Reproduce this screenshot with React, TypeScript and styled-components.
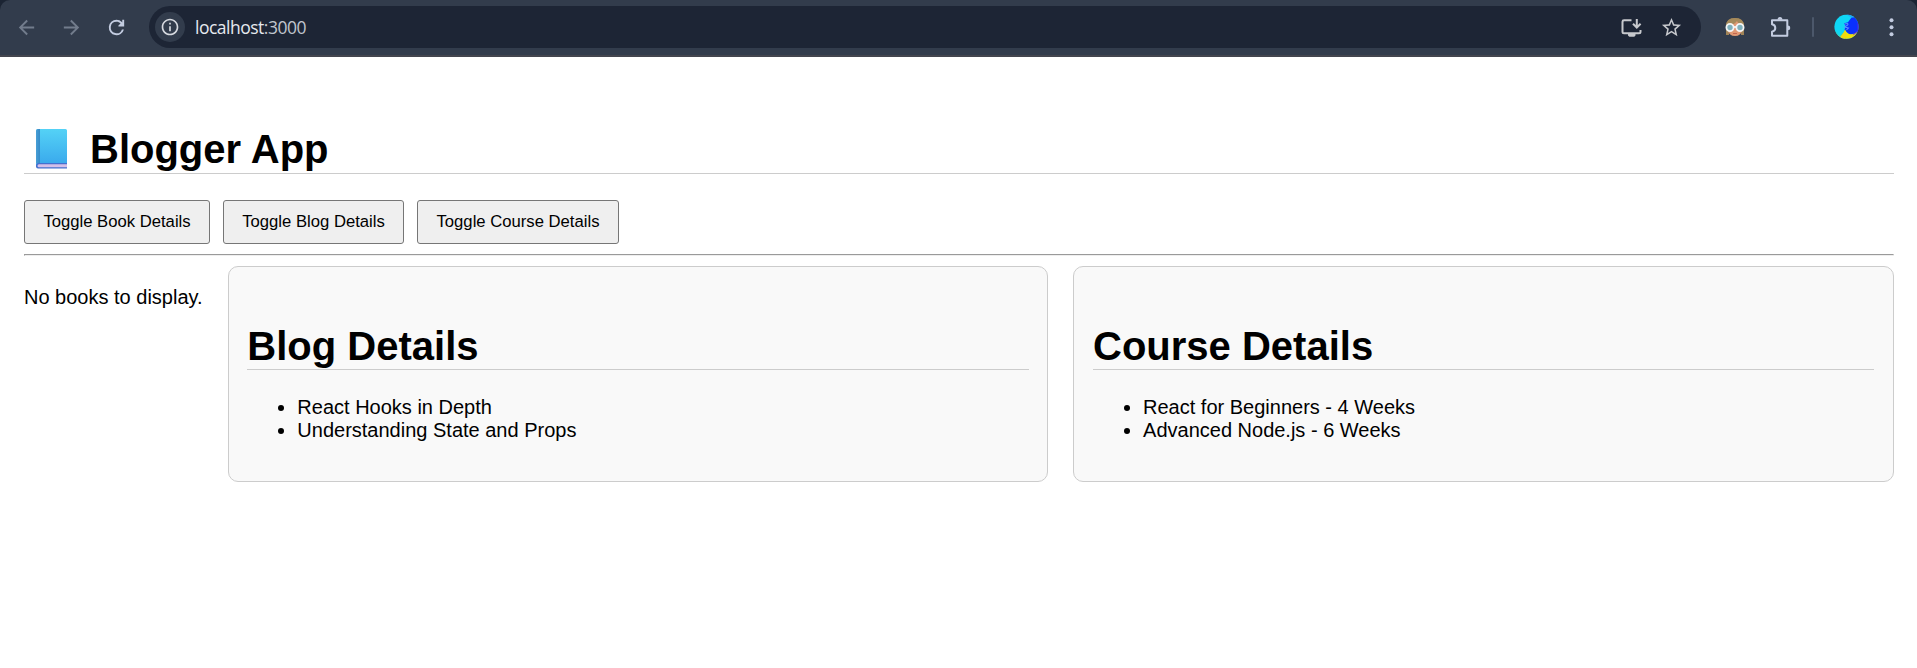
import React, { useState } from "react";
import styled, { createGlobalStyle } from "styled-components";

const GlobalStyle = createGlobalStyle`
  * { box-sizing: border-box; }
  body {
    margin: 0;
    background: #fff;
    color: #000;
    font: 20px/23px "Liberation Sans", Arial, sans-serif;
  }
`;

const Frame = styled.div`
  background: #1b2433;
`;

const Toolbar = styled.header`
  display: flex;
  align-items: center;
  height: 57px;
  padding: 0 13px 1px 14px;
  background: #323c4c;
  border-bottom: 2px solid #43454e;
  border-radius: 10px 10px 0 0;
`;

const NavGroup = styled.nav`
  display: flex;
  gap: 20px;
  margin-right: 20px;
`;

const IconButton = styled.span<{ $color?: string; $size?: number }>`
  display: flex;
  align-items: center;
  justify-content: center;
  flex: none;
  width: ${(p) => p.$size ?? 25}px;
  height: ${(p) => p.$size ?? 25}px;
  color: ${(p) => p.$color ?? "#c3cce0"};
  svg { display: block; }
`;

const AddressBar = styled.div`
  display: flex;
  align-items: center;
  flex: 1;
  height: 42px;
  padding: 0 17px 0 6px;
  border-radius: 21px;
  background: #1d2535;
`;

const SiteInfo = styled(IconButton)`
  border-radius: 50%;
  background: #323c4c;
`;

const Url = styled.span`
  flex: 1;
  margin-left: 10px;
  color: #e6e9ef;
  font: 17.5px/24px "Open Sans", "Noto Sans", sans-serif;
  letter-spacing: -0.5px;
`;

const Port = styled.span`
  color: #c0c5ce;
`;

const AddressActions = styled.div`
  display: flex;
  gap: 15px;
`;

const BrowserActions = styled.div`
  display: flex;
  align-items: center;
  margin-left: 21px;
`;

const Extensions = styled.div`
  display: flex;
  gap: 21px;
`;

const Separator = styled.span`
  width: 2px;
  height: 20px;
  margin: 0 20px 0 19px;
  border-radius: 1px;
  background: #4c586b;
`;

const Account = styled.div`
  display: flex;
  gap: 20px;
`;

const Page = styled.main`
  padding: 70px 23px 0 24px;
`;

const Title = styled.h1`
  display: flex;
  align-items: flex-start;
  height: 47px;
  margin: 0 0 26px;
  border-bottom: 1px solid #ccc;
  font-size: 40px;
  line-height: 45px;
  svg { flex: none; margin: 2px 23px 0 12px; }
`;

const ButtonRow = styled.div`
  display: flex;
  gap: 13px;
`;

const ToggleButton = styled.button<{ $width: number }>`
  width: ${(p) => p.$width}px;
  height: 44px;
  padding: 0 0 2px;
  border: 1px solid #767676;
  border-radius: 3px;
  background: #efefef;
  color: #000;
  font: 16.667px/19px "Liberation Sans", Arial, sans-serif;
  white-space: nowrap;
`;

const Rule = styled.hr`
  height: 2px;
  margin: 10px 0;
  border: 1px solid;
  border-color: #9a9a9a #eee #eee #9a9a9a;
`;

const Columns = styled.div`
  display: flex;
  gap: 25px;
`;

const EmptyNote = styled.p`
  flex: none;
  width: 178.6px;
  margin: 20px 0 0;
  white-space: nowrap;
`;

const Card = styled.section`
  flex: 1;
  height: 216px;
  padding: 57px 18.75px 0;
  border: 1px solid #ccc;
  border-radius: 10px;
  background: #f9f9f9;
`;

const CardTitle = styled(Title)`
  height: 46px;
  margin-bottom: 26px;
`;

const List = styled.ul`
  margin: 0;
  padding-left: 50px;
`;

const ArrowIcon = ({ flip = false }: { flip?: boolean }) => (
  <svg width="23" height="23" viewBox="0 0 24 24" fill="currentColor">
    <path
      transform={flip ? "translate(24 0) scale(-1 1)" : undefined}
      d="M20 11H7.83l5.59-5.59L12 4l-8 8 8 8 1.41-1.41L7.83 13H20v-2z"
    />
  </svg>
);

const ReloadIcon = () => (
  <svg width="23" height="23" viewBox="0 0 24 24" fill="currentColor">
    <path d="M17.65 6.35A7.96 7.96 0 0 0 12 4a8 8 0 1 0 7.73 10h-2.08A6 6 0 1 1 12 6c1.66 0 3.14.69 4.22 1.78L14 10v1h6V4h-2v2.7z" />
  </svg>
);

const InfoIcon = () => (
  <svg width="20" height="20" viewBox="0 0 24 24" fill="currentColor">
    <path d="M11 7h2v2h-2zm0 4h2v6h-2zm1-9C6.48 2 2 6.48 2 12s4.48 10 10 10 10-4.48 10-10S17.52 2 12 2zm0 18c-4.41 0-8-3.59-8-8s3.59-8 8-8 8 3.59 8 8-3.59 8-8 8z" />
  </svg>
);

const InstallIcon = () => (
  <svg width="25" height="25" viewBox="0 0 25 25" fill="none" stroke="currentColor" strokeWidth="2">
    <path d="M12.5 5.3H5Q3.5 5.3 3.5 6.7V16.7Q3.5 18.2 5 18.2H20Q21.5 18.2 21.5 16.7V15" />
    <path d="M17.8 4V12M14 8.7l3.8 3.8 3.8-3.8" />
    <path d="M9 18h7.5v2.5l-1.2 1.2h-5L9 20.5z" fill="currentColor" stroke="none" />
  </svg>
);

const StarIcon = () => (
  <svg width="23" height="23" viewBox="0 0 24 24" fill="currentColor">
    <path d="M22 9.24l-7.19-.62L12 2 9.19 8.63 2 9.24l5.46 4.73L5.82 21 12 17.27 18.18 21l-1.63-7.03L22 9.24zM12 15.4l-3.76 2.27 1-4.28-3.32-2.88 4.38-.38L12 6.1l1.71 4.04 4.38.38-3.32 2.88 1 4.28L12 15.4z" />
  </svg>
);

const FaceIcon = () => (
  <svg width="20" height="20" viewBox="0 0 20 20">
    <path d="M1 18V9Q1 1 10 1t9 8v9h-3V8H4v10z" fill="#a08458" />
    <path d="M3 8Q9 7 12 3q2 4 5 5v5q-1 6-7 6t-7-6z" fill="#e09873" />
    <path d="M1 10Q1 1 10 1t9 9Q14 8 12 4 9 8 1 10z" fill="#a58a5b" />
    <g fill="#7fb0bc" stroke="#f4f5f5" strokeWidth="1.8">
      <circle cx="5" cy="10.5" r="3.6" />
      <circle cx="15" cy="10.5" r="3.6" />
      <path d="M8.5 10h3" />
    </g>
    <path d="M8 16.5h4" stroke="#c4664f" strokeWidth="1" />
  </svg>
);

const PuzzleIcon = () => (
  <svg width="25" height="25" viewBox="0 0 25 25" fill="none" stroke="currentColor" strokeWidth="2" strokeLinejoin="round">
    <path d="M4 5.2H19.3V20.7H4V16.7Q7.3 16 7.3 13T4 9.3z" />
    <path d="M9.6 4.7a2.4 2.7 0 0 1 4.8 0zM19.8 10.5a2.5 2.4 0 0 1 0 4.8z" fill="currentColor" stroke="none" />
  </svg>
);

const ProfileIcon = () => (
  <svg width="26" height="26" viewBox="0 0 26 26">
    <defs>
      <clipPath id="profile-disc"><circle cx="13" cy="12.7" r="12.6" /></clipPath>
    </defs>
    <g clipPath="url(#profile-disc)">
      <rect width="26" height="26" fill="#0fd6f5" />
      <path d="M13 0l6 4 2-2-3-2z" fill="#22a8f8" />
      <path d="M18 3.5L26 2v18l-10 1-5-5 1-4-1.5-3 4-1z" fill="#0a30fc" />
      <path d="M11.5 15.5q2 5 6 5 4 .5 7-2.5l-4 8H7l-1.5-4q4-1 6-6.5z" fill="#f0e108" />
      <path d="M1 17l5 5 4-4-1 8H3z" fill="#2fd5c4" />
      <path d="M7 22.5l4-5 2 4-2 5H7z" fill="#f0d812" />
      <path d="M11 10q5-1.5 3 1l-3 2 4 1-2 2" fill="none" stroke="#5a92ff" strokeWidth="1.1" />
      <path d="M25 8.5v8l-5 5" fill="none" stroke="#6b21d8" strokeWidth="1" />
    </g>
  </svg>
);

const MenuIcon = () => (
  <svg width="25" height="25" viewBox="0 0 25 25" fill="currentColor">
    <circle cx="12.5" cy="5.2" r="2" />
    <circle cx="12.5" cy="12.2" r="2" />
    <circle cx="12.5" cy="19.2" r="2" />
  </svg>
);

const BookIcon = () => (
  <svg width="31" height="40" viewBox="0 0 31 40">
    <defs>
      <linearGradient id="book-cover" x1="0" y1="0" x2="0" y2="1">
        <stop offset="0" stopColor="#54d2f6" />
        <stop offset="1" stopColor="#39a8ec" />
      </linearGradient>
      <linearGradient id="book-spine" x1="0" y1="0" x2="1" y2="0">
        <stop offset="0" stopColor="#499fd6" />
        <stop offset="1" stopColor="#348bc8" />
      </linearGradient>
    </defs>
    <path d="M2 33h29v6.5H2q-2 0-2-2V35z" fill="#4470cf" />
    <path d="M3 35.2h28v3H3q-1.5 0-1.5-1.5T3 35.2z" fill="#d4bfe8" />
    <path d="M2 0h27.5q1.5 0 1.5 1.5V34H2q-2 0-2 2V2q0-2 2-2z" fill="url(#book-cover)" />
    <path d="M2 0h2v34H2q-2 0-2 2V2q0-2 2-2z" fill="url(#book-spine)" />
  </svg>
);

const blogs = ["React Hooks in Depth", "Understanding State and Props"];
const courses = ["React for Beginners - 4 Weeks", "Advanced Node.js - 6 Weeks"];

function DetailCard({ title, items }: { title: string; items: string[] }) {
  return (
    <Card>
      <CardTitle>{title}</CardTitle>
      <List>{items.map((item) => <li key={item}>{item}</li>)}</List>
    </Card>
  );
}

export default function App() {
  const [showBooks, setShowBooks] = useState(true);
  const [showBlogs, setShowBlogs] = useState(true);
  const [showCourses, setShowCourses] = useState(true);

  return (
    <>
      <GlobalStyle />
      <Frame>
        <Toolbar>
          <NavGroup>
            <IconButton $color="#727c8c"><ArrowIcon /></IconButton>
            <IconButton $color="#727c8c"><ArrowIcon flip /></IconButton>
            <IconButton><ReloadIcon /></IconButton>
          </NavGroup>
          <AddressBar>
            <SiteInfo $size={30} $color="#d7dae0"><InfoIcon /></SiteInfo>
            <Url>localhost<Port>:3000</Port></Url>
            <AddressActions>
              <IconButton $color="#c7c9cd"><InstallIcon /></IconButton>
              <IconButton $color="#c7c9cd"><StarIcon /></IconButton>
            </AddressActions>
          </AddressBar>
          <BrowserActions>
            <Extensions>
              <IconButton><FaceIcon /></IconButton>
              <IconButton><PuzzleIcon /></IconButton>
            </Extensions>
            <Separator />
            <Account>
              <IconButton><ProfileIcon /></IconButton>
              <IconButton><MenuIcon /></IconButton>
            </Account>
          </BrowserActions>
        </Toolbar>
      </Frame>
      <Page>
        <Title><BookIcon />Blogger App</Title>
        <ButtonRow>
          <ToggleButton $width={186} onClick={() => setShowBooks(!showBooks)}>Toggle Book Details</ToggleButton>
          <ToggleButton $width={181} onClick={() => setShowBlogs(!showBlogs)}>Toggle Blog Details</ToggleButton>
          <ToggleButton $width={202} onClick={() => setShowCourses(!showCourses)}>Toggle Course Details</ToggleButton>
        </ButtonRow>
        <Rule />
        <Columns>
          {showBooks && <EmptyNote>No books to display.</EmptyNote>}
          {showBlogs && <DetailCard title="Blog Details" items={blogs} />}
          {showCourses && <DetailCard title="Course Details" items={courses} />}
        </Columns>
      </Page>
    </>
  );
}
